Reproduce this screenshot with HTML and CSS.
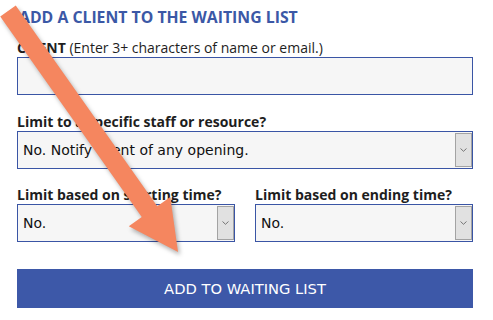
FILE: index.html
```html
<!DOCTYPE html>
<html lang="en">
<head>
<meta charset="utf-8">
<title>Add a client to the waiting list</title>
<link rel="stylesheet" href="styles.css">
</head>
<body>
<div class="page">
  <form class="form">
    <h2 class="title">ADD A CLIENT TO THE WAITING LIST</h2>
    <div class="field first">
      <label class="label"><b>CLIENT</b> (Enter 3+ characters of name or email.)</label>
      <div class="input"></div>
    </div>
    <div class="field">
      <label class="label"><b>Limit to a specific staff or resource?</b></label>
      <div class="select">
        <span class="select-text">No. Notify client of any opening.</span>
        <span class="select-btn"><svg width="7" height="4" viewBox="0 0 7 4"><path d="M0.5 0.5 L3.5 3.3 L6.5 0.5" fill="none" stroke="#6a6a6a" stroke-width="0.9"/></svg></span>
      </div>
    </div>
    <div class="row">
      <div class="field">
        <label class="label"><b>Limit based on starting time?</b></label>
        <div class="select">
          <span class="select-text">No.</span>
          <span class="select-btn"><svg width="7" height="4" viewBox="0 0 7 4"><path d="M0.5 0.5 L3.5 3.3 L6.5 0.5" fill="none" stroke="#6a6a6a" stroke-width="0.9"/></svg></span>
        </div>
      </div>
      <div class="field">
        <label class="label"><b>Limit based on ending time?</b></label>
        <div class="select">
          <span class="select-text">No.</span>
          <span class="select-btn"><svg width="7" height="4" viewBox="0 0 7 4"><path d="M0.5 0.5 L3.5 3.3 L6.5 0.5" fill="none" stroke="#6a6a6a" stroke-width="0.9"/></svg></span>
        </div>
      </div>
    </div>
    <div class="button">ADD TO WAITING LIST</div>
  </form>
  <svg class="arrow" width="493" height="320" viewBox="0 0 493 320">
    <g transform="translate(8 11) rotate(54.8)">
      <polygon points="0,-9.5 245.5,-9.5 245.5,-25.4 295,0 245.5,25.4 245.5,9.5 0,9.5" fill="#f5865f"/>
    </g>
  </svg>
</div>
</body>
</html>
```

FILE: styles.css
```css
html, body {
  margin: 0;
  padding: 0;
  background: #ffffff;
}

.page {
  position: relative;
  width: 493px;
  height: 320px;
  overflow: hidden;
}

.form {
  width: 456px;
  padding: 6px 0 0 17px;
  margin: 0;
  display: flex;
  flex-direction: column;
}

.title {
  margin: 0 0 11px 2px;
  font-family: "Open Sans", sans-serif;
  font-weight: 700;
  font-size: 15.8px;
  line-height: 22px;
  color: #3b58a6;
}

.field {
  display: flex;
  flex-direction: column;
  margin-top: 18px;
}

.field.first {
  margin-top: 0;
}

.label {
  font-family: "Open Sans", sans-serif;
  font-size: 14px;
  line-height: 18px;
  color: #1e1e1e;
}

.label b {
  font-weight: 700;
}

.input {
  height: 38px;
  box-sizing: border-box;
  border: 1px solid #3a55a5;
  background: #f6f6f6;
}

.select {
  height: 38px;
  box-sizing: border-box;
  border: 1px solid #3a55a5;
  background: #f6f6f6;
  display: flex;
  align-items: stretch;
}

.select-text {
  flex: 1;
  display: flex;
  align-items: center;
  padding-left: 5px;
  font-family: "DejaVu Sans", Verdana, sans-serif;
  font-size: 14px;
  color: #111111;
}

.select-btn {
  width: 15px;
  margin: 1px 0 1px 0;
  border: 1px solid #a3a3a3;
  background: #e1e1e1;
  display: flex;
  align-items: center;
  justify-content: center;
}

.row {
  display: grid;
  grid-template-columns: 1fr 1fr;
  column-gap: 20px;
  margin-top: 17px;
}

.row .field {
  margin-top: 0;
}

.button {
  margin-top: 27px;
  height: 39px;
  background: #3d58a8;
  color: #ffffff;
  display: flex;
  align-items: center;
  justify-content: center;
  font-family: "DejaVu Sans", Verdana, sans-serif;
  font-size: 14.7px;
}

.arrow {
  position: absolute;
  left: 0;
  top: 0;
  pointer-events: none;
  filter: drop-shadow(2px 3px 2px rgba(0, 0, 0, 0.3));
}
```
